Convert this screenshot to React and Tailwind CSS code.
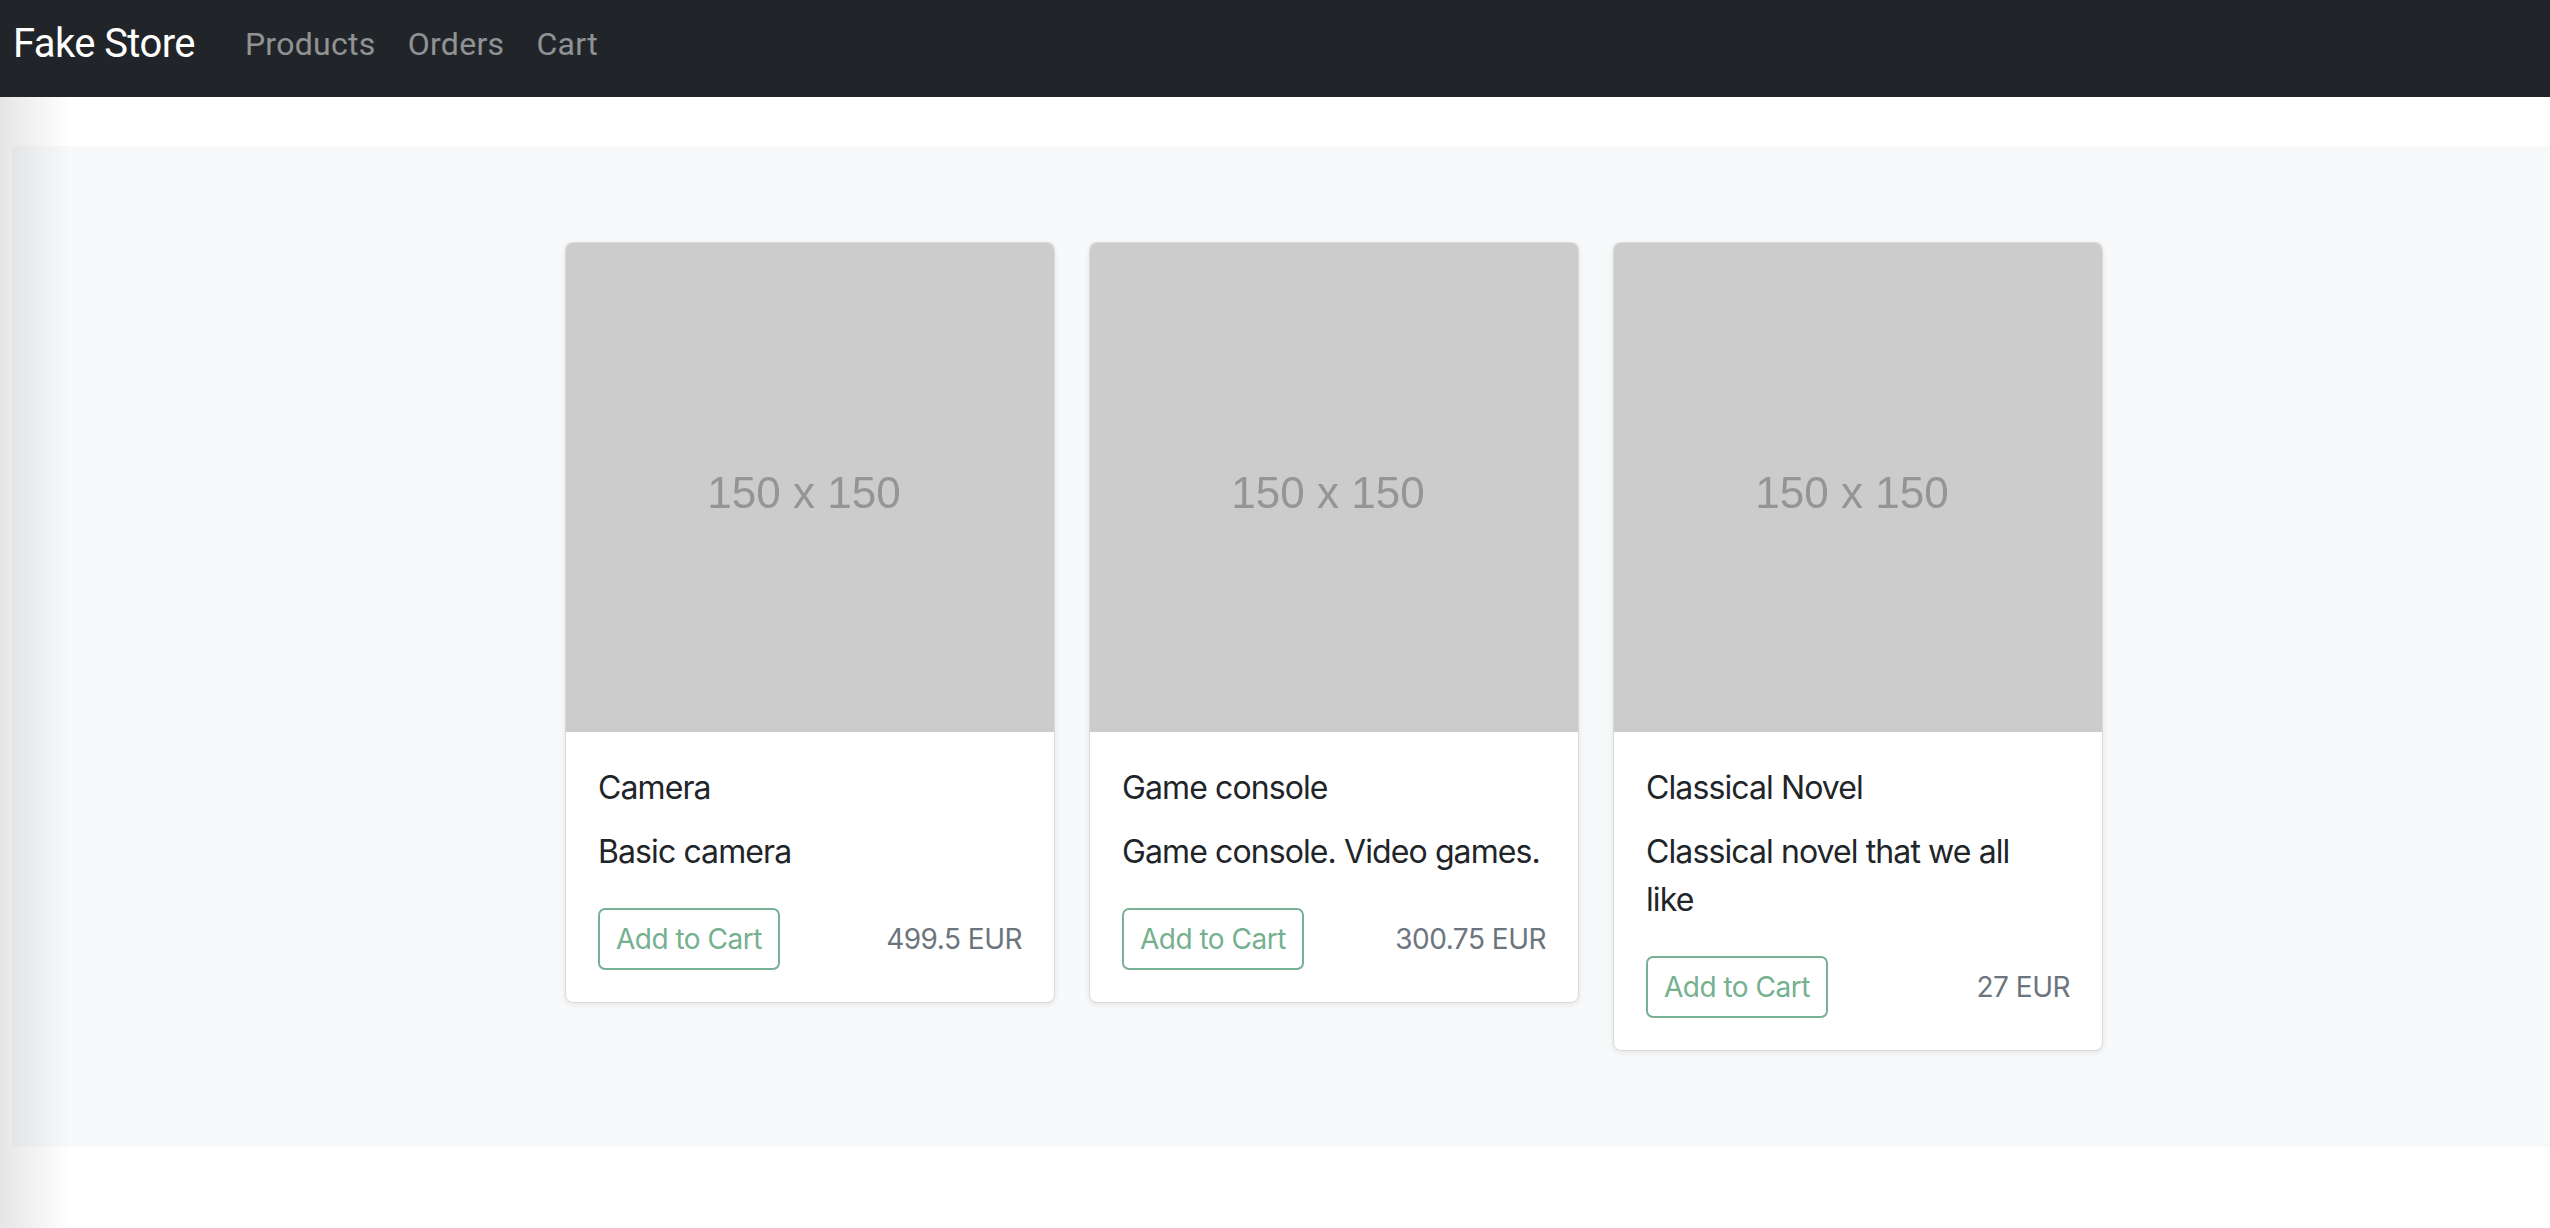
const products = [
  { id: 1, name: "Camera", description: "Basic camera", price: "499.5" },
  { id: 2, name: "Game console", description: "Game console. Video games.", price: "300.75" },
  { id: 3, name: "Classical Novel", description: "Classical novel that we all\nlike", price: "27" },
];

const ProductCard = ({ product }) => {
  return (
    <div className="w-[490px] bg-white border border-black/15 rounded-[8px] shadow-[0_2px_6px_rgba(0,0,0,0.08)] overflow-hidden">
      <div className="h-[489px] bg-[#cccccc] flex items-center justify-center pt-[10px]">
        <span className="text-[44px] text-[#959595] blur-[0.7px] font-['Liberation_Sans',sans-serif] pr-[12px]">150 x 150</span>
      </div>
      <div className="p-[32px] font-['Inter',sans-serif] text-[32px] leading-[48px] text-[#212529] tracking-[-0.9px]">
        <h5 className="mb-[16px]">{product.name}</h5>
        <p className="mb-[32px] whitespace-pre-line">{product.description}</p>
        <div className="flex items-center justify-between text-[28px] tracking-[-0.5px]">
          <button className="leading-[42px] py-[8px] px-[16px] border-2 border-[#78b193] rounded-[7px] text-[#75b08f]">
            Add to Cart
          </button>
          <span className="text-[#6c757d]">{product.price} EUR</span>
        </div>
      </div>
    </div>
  );
};

const App = () => {
  return (
    <div className="relative min-h-[1228px] bg-white">
      <nav className="h-[97px] bg-[#212529] flex items-center pl-[13px] pb-[10px] font-['Roboto',sans-serif]">
        <span className="text-[40px] text-white tracking-[-0.6px] mr-[34px]">Fake Store</span>
        <a className="text-[32px] text-white/50 px-[16px] tracking-[0.3px]">Products</a>
        <a className="text-[32px] text-white/50 px-[16px] tracking-[0.3px]">Orders</a>
        <a className="text-[32px] text-white/50 px-[16px] tracking-[0.3px]">Cart</a>
      </nav>

      <main className="pt-[49px]">
        <section className="ml-[12px] bg-[#f8f9fa] py-[96px] pl-[553px] flex items-start gap-[34px]">
          {products.map((p) => (
            <ProductCard key={p.id} product={p} />
          ))}
        </section>
      </main>

      <div className="absolute left-0 top-[97px] bottom-0 w-[70px] bg-linear-to-r from-black/10 to-transparent pointer-events-none" />
    </div>
  );
};

export default App;
